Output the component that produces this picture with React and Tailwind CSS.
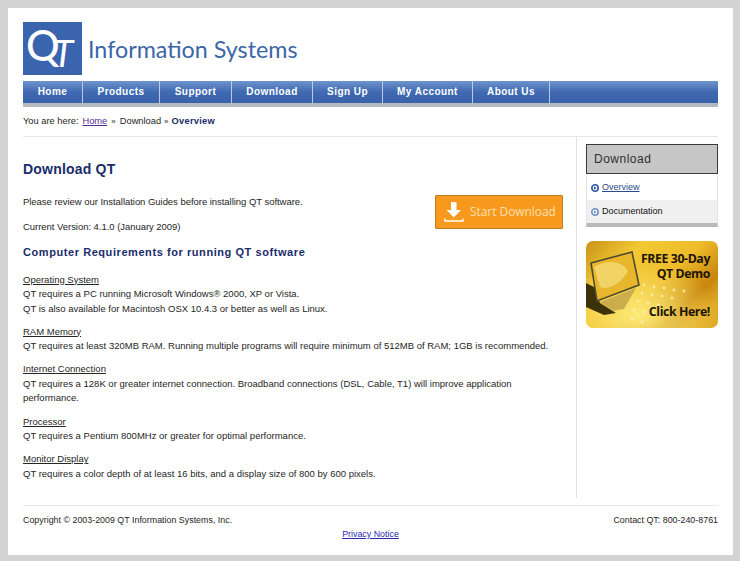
const navItems = [
  { label: 'Home', width: 'w-[60px]' },
  { label: 'Products', width: 'w-[77px]' },
  { label: 'Support', width: 'w-[72px]' },
  { label: 'Download', width: 'w-[81px]' },
  { label: 'Sign Up', width: 'w-[70px]' },
  { label: 'My Account', width: 'w-[90px]' },
  { label: 'About Us', width: 'w-[77px]' },
]

const requirements = [
  {
    title: 'Operating System',
    lines: [
      'QT requires a PC running Microsoft Windows® 2000, XP or Vista.',
      'QT is also available for Macintosh OSX 10.4.3 or better as well as Linux.',
    ],
  },
  {
    title: 'RAM Memory',
    lines: ['QT requires at least 320MB RAM. Running multiple programs will require minimum of 512MB of RAM; 1GB is recommended.'],
  },
  {
    title: 'Internet Connection',
    lines: [
      'QT requires a 128K or greater internet connection. Broadband connections (DSL, Cable, T1) will improve application',
      'performance.',
    ],
  },
  {
    title: 'Processor',
    lines: ['QT requires a Pentium 800MHz or greater for optimal performance.'],
  },
  {
    title: 'Monitor Display',
    lines: ['QT requires a color depth of at least 16 bits, and a display size of 800 by 600 pixels.'],
  },
]

function Logo() {
  return (
    <div className="flex items-center gap-[6px]">
      <div className="relative h-[53px] w-[59px] bg-[#3a64ae] text-white">
        <span className="absolute left-[3px] top-[1px] font-['Lato',sans-serif] text-[42px] font-medium leading-[44px]">Q</span>
        <span className="absolute left-[30px] top-[9px] font-['Lato',sans-serif] text-[37px] italic leading-[44px]">T</span>
      </div>
      <span className="mt-[3px] font-['Lato',sans-serif] text-[23.3px] leading-none text-[#3a66a8]">
        Information Systems
      </span>
    </div>
  )
}

function Bullet({ muted }) {
  return (
    <svg width="8" height="8" viewBox="0 0 8 8" className="shrink-0">
      <circle cx="4" cy="4" r="3.2" fill="white" stroke={muted ? '#6f8fc4' : '#2c5a9e'} strokeWidth="1.6" />
      <path d="M3 2.2 L5.6 4 L3 5.8 Z" fill={muted ? '#6f8fc4' : '#2c5a9e'} />
    </svg>
  )
}

function DemoBanner() {
  return (
    <div className="relative mt-[14px] h-[87px] w-[132px] overflow-hidden rounded-[7px]">
      <svg width="132" height="87" viewBox="0 0 132 87" className="absolute left-0 top-0">
        <defs>
          <linearGradient id="gold" x1="0" y1="0" x2="1" y2="0.7">
            <stop offset="0" stopColor="#c9921a" />
            <stop offset="0.3" stopColor="#f2c933" />
            <stop offset="0.6" stopColor="#eebc2a" />
            <stop offset="0.85" stopColor="#c8860f" />
            <stop offset="1" stopColor="#e0aa25" />
          </linearGradient>
          <radialGradient id="glow" cx="0.4" cy="0.85" r="0.6">
            <stop offset="0" stopColor="#fdeb7a" />
            <stop offset="1" stopColor="#fdeb7a" stopOpacity="0" />
          </radialGradient>
        </defs>
        <rect width="132" height="87" fill="url(#gold)" />
        <rect width="132" height="87" fill="url(#glow)" />
        <path d="M0 42 L8 46 L14 62 L30 72 L18 74 L0 66 Z" fill="#3b3208" />
        <path d="M5 22 L46 11 L53 44 L11 60 Z" fill="#e8b62a" stroke="#4c4a34" strokeWidth="1.6" />
        <path d="M8 26 C22 18 36 20 42 30 C36 42 22 50 14 46 Z" fill="#f8e690" opacity="0.6" />
        <path d="M14 61 L50 47 L38 68 L26 70 Z" fill="#b99a44" opacity="0.7" />
        <g fill="#fdf2b4" opacity="0.8">
          <circle cx="58" cy="44" r="1.4" />
          <circle cx="68" cy="46" r="1.4" />
          <circle cx="78" cy="47" r="1.4" />
          <circle cx="88" cy="49" r="1.4" />
          <circle cx="98" cy="50" r="1.4" />
          <circle cx="56" cy="52" r="1.4" />
          <circle cx="66" cy="54" r="1.4" />
          <circle cx="76" cy="55" r="1.4" />
          <circle cx="86" cy="57" r="1.4" />
          <circle cx="52" cy="60" r="1.4" />
          <circle cx="62" cy="62" r="1.4" />
          <circle cx="72" cy="64" r="1.4" />
          <circle cx="48" cy="69" r="1.4" />
          <circle cx="58" cy="71" r="1.4" />
          <circle cx="68" cy="73" r="1.4" />
          <circle cx="46" cy="78" r="1.4" />
          <circle cx="56" cy="81" r="1.4" />
        </g>
      </svg>
      <div className="absolute right-[8px] top-[10px] text-right font-['Open_Sans',sans-serif] text-[12.3px] font-bold leading-[15px] tracking-[-0.4px] text-[#1c1404]">
        <div>FREE 30-Day</div>
        <div>QT Demo</div>
      </div>
      <div className="absolute bottom-[10px] right-[8px] font-['Open_Sans',sans-serif] text-[12.3px] font-bold leading-none tracking-[-0.4px] text-[#1c1404]">
        Click Here!
      </div>
    </div>
  )
}

export default function App() {
  return (
    <div className="h-[561px] w-[740px] overflow-hidden bg-[#d3d3d3] pb-[6px] pl-[8px] pr-[7px] pt-[8px] font-['Liberation_Sans',Arial,sans-serif] text-[9.5px] text-[#262626]">
      <div className="h-full bg-white px-[15px] pt-[14px]">
        <Logo />

        <nav className="mt-[6px] border-b-[4px] border-[#b4b8bf]">
          <ul className="flex h-[22px] bg-gradient-to-b from-[#6f93cc] via-[#3f69b2] to-[#3a62aa]">
            {navItems.map((item) => (
              <li
                key={item.label}
                className={`${item.width} border-r border-[#b9cbe6] text-center text-[10px] font-bold leading-[22px] tracking-[0.45px] text-white`}
              >
                {item.label}
              </li>
            ))}
          </ul>
        </nav>

        <div className="flex h-[30px] items-center gap-[3px] border-b border-[#e6e6e6] text-[9.3px]">
          <span>You are here:</span>
          <a href="#" className="ml-[1px] text-[#5a2d91] underline">Home</a>
          <span className="ml-[1px] text-[8px]">»</span>
          <span className="ml-[1px]">Download</span>
          <span className="text-[8px]">»</span>
          <span className="font-bold tracking-[0.25px] text-[#1a2d6b]">Overview</span>
        </div>

        <div className="flex h-[361px]">
          <main className="w-[554px] border-r border-[#e2e2e2] pr-[13px]">
            <h1 className="mt-[23px] text-[14px] font-bold leading-[18px] tracking-[0.2px] text-[#1a2d6b]">Download QT</h1>

            <div className="flex items-start justify-between">
              <div className="tracking-[-0.04px]">
                <p className="mt-[17px] leading-[14px]">Please review our Installation Guides before installing QT software.</p>
                <p className="mt-[11px] leading-[14px]">Current Version: 4.1.0 (January 2009)</p>
              </div>
              <a
                href="#"
                className="mt-[17px] flex h-[34px] w-[128px] items-center gap-[6px] rounded-[1px] border border-[#c07c28] bg-[#f7991c] pl-[8px] font-['Open_Sans',sans-serif] text-[11.9px] text-[#fde0b2]"
              >
                <svg width="20" height="22" viewBox="0 0 20 22" className="shrink-0">
                  <path d="M7 1 H12.5 V9 H17 L9.8 16.5 L2.5 9 H7 Z" fill="white" />
                  <path d="M1 17.5 V20 H19 V17.5" fill="none" stroke="white" strokeWidth="1.4" />
                </svg>
                Start Download
              </a>
            </div>

            <h2 className="mt-[11px] text-[11px] font-bold leading-[14px] tracking-[0.57px] text-[#1a2d6b]">
              Computer Requirements for running QT software
            </h2>

            <div className="mt-[13.5px]">
              {requirements.map((req) => (
                <section key={req.title} className="mb-[8.7px] leading-[14.5px]">
                  <h3 className="underline">{req.title}</h3>
                  {req.lines.map((line) => (
                    <p key={line}>{line}</p>
                  ))}
                </section>
              ))}
            </div>
          </main>

          <aside className="w-[141px] pl-[9px] pt-[7px]">
            <div className="h-[30px] border border-[#3a3a3a] bg-[#c6c6c6] pl-[7px] text-[12px] leading-[28px] tracking-[0.5px] text-[#2e2e2e]">
              Download
            </div>
            <ul className="mt-[1px] border-x border-b-[4px] border-x-[#e4e4e4] border-b-[#b9b9b9] text-[9px]">
              <li className="flex h-[25px] items-center gap-[3px] pl-[4px]">
                <Bullet />
                <a href="#" className="text-[#2d4a8c] underline">Overview</a>
              </li>
              <li className="flex h-[23px] items-center gap-[3px] bg-[#f0f0f0] pl-[4px] text-[#111]">
                <Bullet muted />
                Documentation
              </li>
            </ul>
            <DemoBanner />
          </aside>
        </div>

        <footer className="mt-[7px] border-t border-[#e8e8e8] pt-[8px] text-[8.9px]">
          <div className="flex justify-between leading-[12px]">
            <span>Copyright © 2003-2009 QT Information Systems, Inc.</span>
            <span>Contact QT: 800-240-8761</span>
          </div>
          <div className="mt-[2px] text-center leading-[12px]">
            <a href="#" className="text-[#2a2ab0] underline">Privacy Notice</a>
          </div>
        </footer>
      </div>
    </div>
  )
}
